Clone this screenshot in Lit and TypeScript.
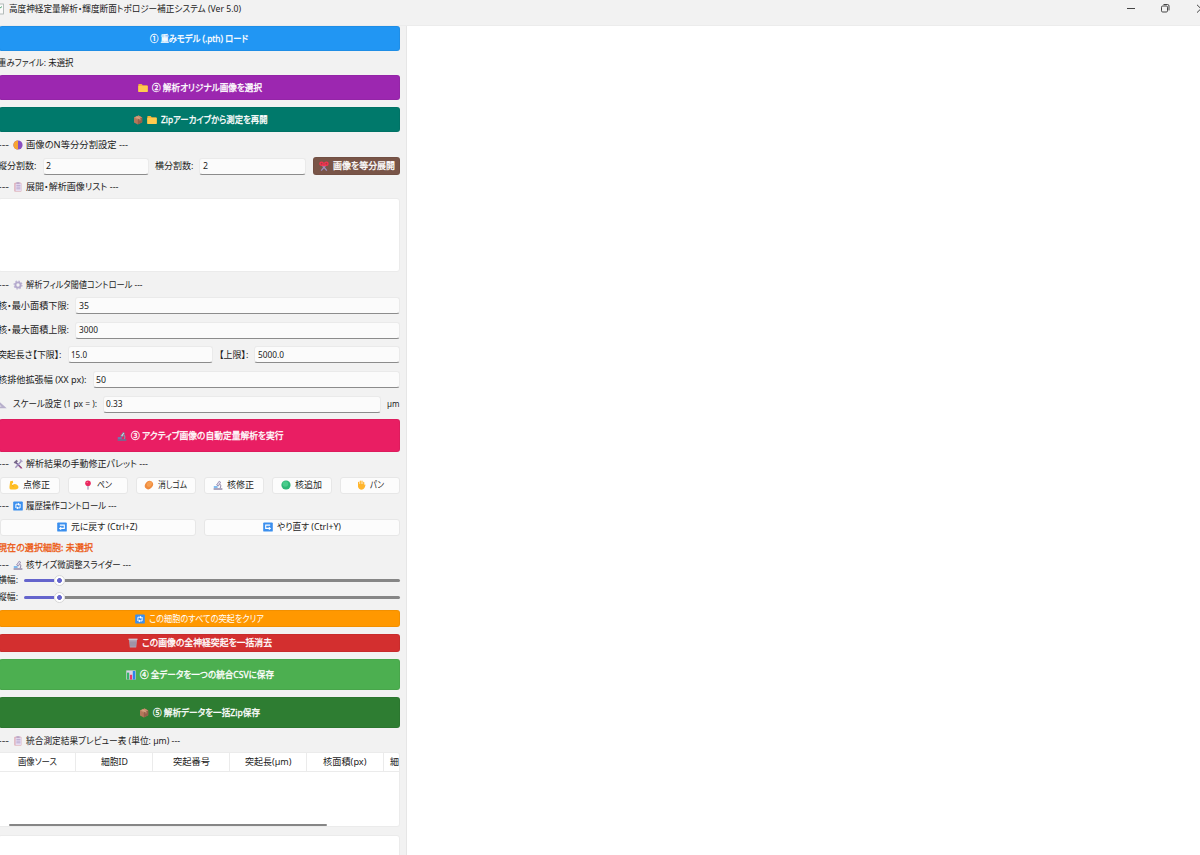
import { LitElement, html, svg, css } from "lit";
import { customElement } from "lit/decorators.js";

const ICONS: Record<string, any> = {
  folder: svg`<path d="M0.3 1.8Q0.3 1 1 1H3.6L4.8 2.2H9Q9.7 2.2 9.7 3V8.2Q9.7 9 9 9H1Q0.3 9 0.3 8.2Z" fill="#f5b43c"/><path d="M0.3 3H9.7V8.2Q9.7 9 9 9H1Q0.3 9 0.3 8.2Z" fill="#ffcb4f"/>`,
  box: svg`<path d="M1 2.6L5.6 0.6L9.2 2.6V7.2L4.8 9.6L1 7.6Z" fill="#b5775a"/><path d="M1 2.6L5.6 0.6L9.2 2.6L4.8 4.6Z" fill="#cb8f6e"/><path d="M4.8 4.6L9.2 2.6V7.2L4.8 9.6Z" fill="#96604a"/><path d="M2.9 1.8L7 3.6V5.4" fill="none" stroke="#dcae8e" stroke-width="0.7"/>`,
  moon: svg`<circle cx="5" cy="5" r="4.6" fill="#8b4fc0"/><path d="M5 0.4A4.6 4.6 0 0 0 5 9.6Z" fill="#f8a531"/>`,
  clip: svg`<rect x="1.4" y="0.8" width="7" height="8.8" rx="0.6" fill="#d79aa6"/><rect x="2.4" y="1.4" width="6" height="7.6" fill="#e6dcf0"/><path d="M3.4 3.4H7.4M3.4 5.1H7.4M3.4 6.8H7.4" stroke="#a995c4" stroke-width="0.7"/><rect x="3.4" y="0.3" width="3.2" height="1.4" fill="#b09dc4"/>`,
  scissors: svg`<path d="M3.2 4L7.8 9.6M6.8 4L2.2 9.6" stroke="#9b8fc0" stroke-width="1.3"/><circle cx="2.6" cy="2.7" r="1.6" fill="#a33b48" stroke="#f8314f" stroke-width="1.4"/><circle cx="7.4" cy="2.7" r="1.6" fill="#a33b48" stroke="#f8314f" stroke-width="1.4"/><path d="M3.4 3.8H6.6L5 6Z" fill="#f8314f"/>`,
  gear: svg`<circle cx="5" cy="5" r="3.9" fill="none" stroke="#beb4d4" stroke-width="1.3" stroke-dasharray="1.5 1.56"/><circle cx="5" cy="5" r="2.6" fill="none" stroke="#b4a9cd" stroke-width="1.9"/>`,
  square: svg`<path d="M0.3 0.8L9.7 9.2H0.3Z" fill="#b8b0cc"/><path d="M2.6 5.8L4.7 7.6H2.6Z" fill="#f2f2f2"/>`,
  scope: svg`<path d="M3.6 5L6.2 1.2L7.6 2.2L5.4 6Z" fill="#e7e4ef" stroke="#8a7fa6" stroke-width="0.8"/><path d="M6.8 4Q8.8 5.6 7.2 8" fill="none" stroke="#8f86a8" stroke-width="1"/><path d="M0.8 7L4.6 7" stroke="#3f9bea" stroke-width="1.3"/><path d="M0.6 9H9.4" stroke="#81779d" stroke-width="1.3"/>`,
  scopeDark: svg`<path d="M3.6 5L6.2 1.2L7.6 2.2L5.4 6Z" fill="#c9d2de" stroke="#6a8094" stroke-width="0.8"/><path d="M6.8 4Q8.8 5.6 7.2 8" fill="none" stroke="#8a93a8" stroke-width="1.1"/><path d="M0.8 7L4.8 7" stroke="#39a3d8" stroke-width="1.3"/><path d="M0.6 9H9.4" stroke="#54809e" stroke-width="1.4"/>`,
  tools: svg`<path d="M2.4 3L8.6 9.2" stroke="#70588e" stroke-width="1.6"/><path d="M8.4 2L2.4 8.8" stroke="#a292bd" stroke-width="1.4"/><path d="M0.6 3.6L3.6 0.8L5 2.2L2.2 4.8Z" fill="#776889"/><path d="M7 0.6L9.4 2.8" stroke="#b1a4c7" stroke-width="1.4"/><path d="M6.6 7L8.8 9.4" stroke="#cf4878" stroke-width="1"/>`,
  arm: svg`<path d="M1.2 1.2L3.8 0.8L4.2 3L3 3.4L3.4 5.2Q5.4 3.4 7.6 4.6Q10 5.8 9.4 8Q8.6 9.6 5.6 9.4H1.6Q0 9 0.5 6.6Z" fill="#ffbf24"/><path d="M3.4 5.2L4.4 6.6" fill="none" stroke="#e8901a" stroke-width="0.7"/>`,
  pin: svg`<path d="M5 5V9.6" stroke="#9384ab" stroke-width="1"/><circle cx="5" cy="3.2" r="2.8" fill="#ea2860"/><circle cx="4.2" cy="2.4" r="0.7" fill="#ff7a9c"/>`,
  egg: svg`<ellipse cx="5" cy="5.1" rx="3.7" ry="4.5" transform="rotate(38 5 5)" fill="#ef8b3e"/><ellipse cx="5.4" cy="4.2" rx="2.2" ry="3" transform="rotate(38 5.4 4.2)" fill="#f7a052"/>`,
  green: svg`<circle cx="5" cy="5" r="4.6" fill="#2fb777"/><circle cx="4.4" cy="4" r="2.8" fill="#49cc8c"/>`,
  hand: svg`<path d="M2.6 5V2.4M4.3 4.6V1.1M6 4.6V1.1M7.7 5V2.4" stroke="#ffb52c" stroke-width="1.2" stroke-linecap="round"/><path d="M2 4H8.3V5.2L9.6 4.6L9 6.8Q8 9.7 5 9.7Q2.6 9.4 2 7Z" fill="#ffb52c"/>`,
  sync: svg`<rect x="0.2" y="0.4" width="9.6" height="9.2" rx="0.9" fill="#3b8fee"/><path d="M2.9 7V3.2H5.4M7.1 3V6.9H4.6" fill="none" stroke="#fff" stroke-width="1"/><path d="M5 1.8L7 3.3L5 4.7ZM5 5.4L3 6.9L5 8.3Z" fill="#fff"/>`,
  undo: svg`<rect x="0.2" y="0.4" width="9.6" height="9.2" rx="0.9" fill="#3b8fee"/><path d="M3.4 6.4H7.3V3.1H2.8" fill="none" stroke="#fff" stroke-width="1.1"/><path d="M4.2 4.6V8.2L1.8 6.4Z" fill="#fff"/>`,
  redo: svg`<rect x="0.2" y="0.4" width="9.6" height="9.2" rx="0.9" fill="#3b8fee"/><path d="M6.6 6.4H2.7V3.1H7.2" fill="none" stroke="#fff" stroke-width="1.1"/><path d="M5.8 4.6V8.2L8.2 6.4Z" fill="#fff"/>`,
  trash: svg`<path d="M1 1.8H9L8.2 9.6H1.8Z" fill="#b0a6b6"/><path d="M3 3V9M5 3V9M7 3V9M1.6 5H8.4M1.8 7H8.2" stroke="#887c92" stroke-width="0.5"/><path d="M0.5 1.3H9.5" stroke="#cbc5d2" stroke-width="1.4"/>`,
  chart: svg`<rect x="0.3" y="0.4" width="9.4" height="9.2" fill="#d9d3e8"/><rect x="1" y="2.6" width="2.2" height="7" fill="#35b567"/><rect x="3.9" y="4.8" width="2.2" height="4.8" fill="#ee3868"/><rect x="6.8" y="1" width="2.4" height="8.6" fill="#2c85ec"/>`,
};

const icon = (name: string) =>
  html`<svg class="icon" width="10" height="10" viewBox="0 0 10 10">${ICONS[name]}</svg>`;

const label = (text: string, width: number, cls = "") =>
  html`<svg class="text ${cls}" width=${width} height="12"><text x="0" y="9.3" textLength=${width} lengthAdjust="spacingAndGlyphs">${text}</text></svg>`;

const section = (name: string, text: string, width: number) => html`
  <div class="section">${label("---", 11)}${icon(name)}${label(text, width)}</div>`;

const field = (value: string, width: number) =>
  html`<div class="field">${label(value, width)}</div>`;

const slider = (text: string) => html`
  <div class="slider">${label(text, 20)}<div class="track"><div class="fill"></div><div class="thumb"></div><div class="rest"></div></div></div>`;

@customElement("app-root")
export class AppRoot extends LitElement {
  static styles = css`
    :host { display: flex; flex-direction: column; width: 1200px; height: 855px; overflow: hidden; background: #fff;
      font-family: "Noto Sans", "Noto Sans CJK JP", sans-serif; font-size: 9.3px; color: #1c1c1c; }
    * { box-sizing: border-box; }
    svg { display: block; flex: none; }
    .text { overflow: visible; fill: currentColor; font-feature-settings: "palt"; }
    .bold { stroke: currentColor; stroke-width: 0.3px; }
    .titlebar { display: flex; align-items: center; height: 26px; flex: none; background: #f2f2f2; border-bottom: 1px solid #ececec; padding-bottom: 7px; }
    .doc { margin-right: 5px; }
    .window { margin-left: auto; }
    .body { display: flex; flex: 1; min-height: 0; }
    .side { width: 407px; background: #f2f2f2; border-right: 1px solid #e6e6e6; overflow: hidden; flex: none; }
    .panel { margin-left: -2px; width: 401.5px; display: flex; flex-direction: column; }
    .panel > * { flex: none; }
    .line { display: flex; align-items: center; height: 24px; }
    .section { display: flex; align-items: center; gap: 3.7px; height: 25px; }
    .short { height: 23px; display: flex; align-items: center; }
    .tight { height: 13px; display: flex; align-items: center; margin-top: -1px; }
    .results { height: 24px; padding-top: 0.5px; }
    .bar { display: flex; align-items: center; justify-content: center; gap: 4px; height: 25px; margin-left: 1px; padding: 1px 0 0 1px; border-radius: 3px; color: #fff; box-shadow: inset 0 0 0 1px rgba(0, 0, 0, 0.05); }
    .blue { background: #2196f3; padding-left: 0; }
    .purple { background: #9c27b0; margin-bottom: 7px; }
    .teal { background: #00796b; }
    .pink { background: #e91e63; height: 33px; margin-top: 6.2px; }
    .orange { background: #ff9800; height: 17px; margin: 4px 0 7px 1px; }
    .red { background: #d32f2f; height: 18px; margin-bottom: 7px; }
    .green { background: #4caf50; height: 31px; margin-bottom: 7px; }
    .forest { background: #2e7d32; height: 31px; }
    .row { display: flex; align-items: center; height: 17px; gap: 6px; margin-bottom: 7.7px; }
    .split { height: 18px; margin-bottom: 0; }
    .last { margin-bottom: 0; }
    .scale { margin-left: -1.5px; }
    .field { flex: 1; display: flex; align-items: center; height: 17px; padding-left: 2.5px; background: #fbfbfb; border: 1px solid #eaeaea; border-bottom: 1px solid #8c8c8c; border-radius: 3px; }
    .brown { width: 87px; height: 18px; margin: 0 0 0 1px; padding: 0 0 0 1px; background: #795548; }
    .list { height: 74px; background: #fff; border: 1px solid #ebebeb; border-radius: 3px; }
    .tools { display: flex; gap: 8px; margin-left: 1.5px; height: 17px; }
    .tool { flex: 1; display: flex; align-items: center; justify-content: center; gap: 4px; background: #fcfcfc; border: 1px solid #e7e7e7; border-radius: 3px; }
    .warn { color: #ec5a14; }
    .slider { display: flex; align-items: center; height: 17px; gap: 6px; }
    .track { flex: 1; display: flex; align-items: center; height: 11px; }
    .fill { width: 30px; height: 3px; background: #6464cc; border-radius: 2px 0 0 2px; }
    .thumb { width: 11px; height: 11px; border-radius: 50%; border: 1px solid #d8d8d8; background: radial-gradient(circle, #6464cc 2.1px, #fff 2.7px); }
    .rest { flex: 1; height: 3px; background: #868686; border-radius: 0 2px 2px 0; }
    .table { height: 75px; background: #fff; border: 1px solid #ebebeb; border-left: 0; border-radius: 0 3px 3px 0; display: flex; flex-direction: column; overflow: hidden; }
    .head { display: flex; height: 19px; flex: none; border-bottom: 1px solid #ebebeb; }
    .cell { width: 77px; flex: none; display: flex; align-items: center; justify-content: center; border-right: 1px solid #ebebeb; }
    .first { width: 78px; padding-left: 2px; }
    .cut { justify-content: flex-start; padding-left: 6px; }
    .scroll { width: 318px; height: 2px; margin: auto 0 0 10.5px; background: #868686; border-radius: 1px; }
    .output { height: 30px; margin-top: 8px; background: #fff; border: 1px solid #ebebeb; border-radius: 3px; }
  `;

  render() {
    return html`
      <div class="titlebar">
        <svg class="doc" width="4" height="12"><rect x="-5" y="1" width="8.5" height="10" fill="#fafafa" stroke="#a3adab" stroke-width="0.8"/><path d="M0 5L2 3.6" stroke="#55a878"/></svg>
        ${label("高度神経定量解析・輝度断面トポロジー補正システム (Ver 5.0)", 232)}
        <svg class="window" width="73" height="12" fill="none" stroke="#444" stroke-width="1">
          <path d="M0 5.5H8"/>
          <rect x="34.5" y="3" width="6" height="6" rx="1.2"/><path d="M36.5 1.5H40.5Q42 1.5 42 3V7.4"/>
          <path d="M70 1.8L78 9.6M78 1.8L70 9.6"/>
        </svg>
      </div>
      <div class="body">
        <div class="side">
          <div class="panel">
            <div class="bar blue">${label("① 重みモデル (.pth) ロード", 98, "bold")}</div>
            <div class="line">${label("重みファイル: 未選択", 75.5)}</div>
            <div class="bar purple">${icon("folder")}${label("② 解析オリジナル画像を選択", 110, "bold")}</div>
            <div class="bar teal">${icon("box")}${icon("folder")}${label("Zipアーカイブから測定を再開", 106.5, "bold")}</div>
            ${section("moon", "画像のN等分分割設定 ---", 102)}
            <div class="row split">
              ${label("縦分割数:", 38.5)}${field("2", 5)}
              ${label("横分割数:", 38.5)}${field("2", 5)}
              <div class="bar brown">${icon("scissors")}${label("画像を等分展開", 62, "bold")}</div>
            </div>
            <div class="short">${section("clip", "展開・解析画像リスト ---", 92.5)}</div>
            <div class="list"></div>
            ${section("gear", "解析フィルタ閾値コントロール ---", 116.5)}
            <div class="row">${label("核・最小面積下限:", 71)}${field("35", 10)}</div>
            <div class="row">${label("核・最大面積上限:", 71)}${field("3000", 19)}</div>
            <div class="row">${label("突起長さ【下限】:", 63.5)}${field("15.0", 16)}${label("【上限】:", 29.5)}${field("5000.0", 26)}</div>
            <div class="row">${label("核排他拡張幅 (XX px):", 88.5)}${field("50", 10)}</div>
            <div class="row last scale">${icon("square")}${label("スケール設定 (1 px = ):", 84)}${field("0.33", 16.5)}${label("µm", 12.5)}</div>
            <div class="bar pink">${icon("scopeDark")}${label("③ アクティブ画像の自動定量解析を実行", 152.5, "bold")}</div>
            ${section("tools", "解析結果の手動修正パレット ---", 122)}
            <div class="tools">
              <div class="tool">${icon("arm")}${label("点修正", 27)}</div>
              <div class="tool">${icon("pin")}${label("ペン", 15)}</div>
              <div class="tool">${icon("egg")}${label("消しゴム", 29)}</div>
              <div class="tool">${icon("scope")}${label("核修正", 27)}</div>
              <div class="tool">${icon("green")}${label("核追加", 27)}</div>
              <div class="tool">${icon("hand")}${label("パン", 14)}</div>
            </div>
            ${section("sync", "履歴操作コントロール ---", 90.5)}
            <div class="tools">
              <div class="tool">${icon("undo")}${label("元に戻す (Ctrl+Z)", 66.5)}</div>
              <div class="tool">${icon("redo")}${label("やり直す (Ctrl+Y)", 64)}</div>
            </div>
            <div class="line warn">${label("現在の選択細胞: 未選択", 95, "bold")}</div>
            <div class="tight">${section("scope", "核サイズ微調整スライダー ---", 105)}</div>
            ${slider("横幅:")}
            ${slider("縦幅:")}
            <div class="bar orange">${icon("sync")}${label("この細胞のすべての突起をクリア", 115)}</div>
            <div class="bar red">${icon("trash")}${label("この画像の全神経突起を一括消去", 130, "bold")}</div>
            <div class="bar green">${icon("chart")}${label("④ 全データを一つの統合CSVに保存", 134, "bold")}</div>
            <div class="bar forest">${icon("box")}${label("⑤ 解析データを一括Zip保存", 107, "bold")}</div>
            <div class="results">${section("clip", "統合測定結果プレビュー表 (単位: µm) ---", 154)}</div>
            <div class="table">
              <div class="head">
                <div class="cell first">${label("画像ソース", 39)}</div>
                <div class="cell">${label("細胞ID", 27)}</div>
                <div class="cell">${label("突起番号", 37)}</div>
                <div class="cell">${label("突起長(µm)", 46.5)}</div>
                <div class="cell">${label("核面積(px)", 43.5)}</div>
                <div class="cell cut">${label("細胞体", 27)}</div>
              </div>
              <div class="scroll"></div>
            </div>
            <div class="output"></div>
          </div>
        </div>
      </div>`;
  }
}
